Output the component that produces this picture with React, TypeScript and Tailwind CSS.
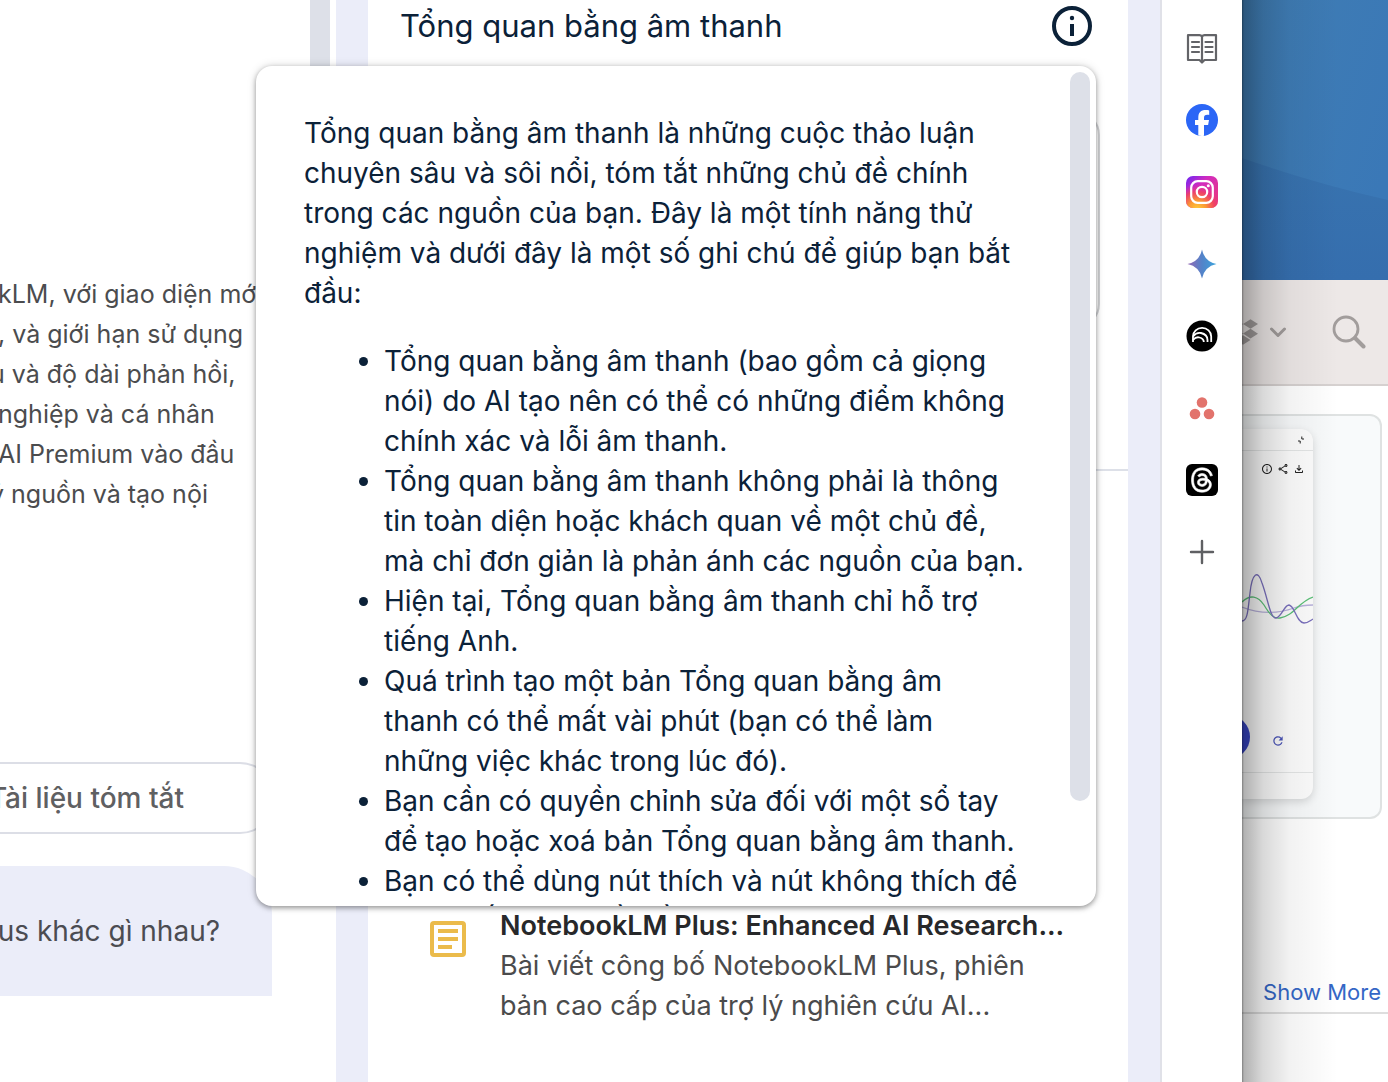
import { FaDropbox, FaThreads } from "react-icons/fa6"
import { MdInfoOutline, MdOutlineFileDownload, MdOutlineShare, MdRefresh } from "react-icons/md"

const answerLines = [
  { text: "kLM, với giao diện mới", indent: "-ml-0.5" },
  { text: ", và giới hạn sử dụng", indent: "-ml-0.5" },
  { text: "u và độ dài phản hồi,", indent: "-ml-2.5" },
  { text: "nghiệp và cá nhân", indent: "-ml-0.5" },
  { text: "AI Premium vào đầu", indent: "-ml-0.5" },
  { text: "ý nguồn và tạo nội", indent: "-ml-2.5" },
]

const notes = [
  "Tổng quan bằng âm thanh (bao gồm cả giọng nói) do AI tạo nên có thể có những điểm không chính xác và lỗi âm thanh.",
  "Tổng quan bằng âm thanh không phải là thông tin toàn diện hoặc khách quan về một chủ đề, mà chỉ đơn giản là phản ánh các nguồn của bạn.",
  "Hiện tại, Tổng quan bằng âm thanh chỉ hỗ trợ tiếng Anh.",
  "Quá trình tạo một bản Tổng quan bằng âm thanh có thể mất vài phút (bạn có thể làm những việc khác trong lúc đó).",
  "Bạn cần có quyền chỉnh sửa đối với một sổ tay để tạo hoặc xoá bản Tổng quan bằng âm thanh.",
  "Bạn có thể dùng nút thích và nút không thích để gửi ý kiến phản hồi về trải nghiệm của bạn.",
]

function ReadingListIcon() {
  return (
    <svg viewBox="0 0 32 32" className="size-8" fill="none" stroke="#636468" strokeWidth="2.200">
      <path d="M2 3.200h11.500q1.600 0 2.500 1.300 .9-1.300 2.500-1.300H30V28H18.500L16 30.500 13.500 28H2z" strokeLinejoin="round" />
      <path d="M16 4.500V30" />
      <path d="M6 10h7M6 15h7M6 20h7M19.500 10h7M19.500 15h7M19.500 20h7" strokeLinecap="round" />
    </svg>
  )
}

function FacebookIcon() {
  return (
    <svg viewBox="0 0 32 32" className="size-8">
      <circle cx="16" cy="16" r="16" fill="#2b66f6" />
      <path
        d="M12.300 31.600V21H9v-5h3.300v-2.200C12.300 8.500 14.700 6 19.800 6c1 0 2.700.2 3.400.4v4.500c-.4 0-1-.1-1.800-.1-2.500 0-3.400 1-3.400 3.400V16h5l-.9 5H18v10.800a16 16 0 0 1-5.700-.2z"
        fill="#fff"
      />
    </svg>
  )
}

function InstagramIcon() {
  return (
    <svg viewBox="0 0 32 32" className="size-8">
      <defs>
        <linearGradient id="ig-base" x1="0" y1="0" x2="1" y2="1">
          <stop offset="0" stopColor="#6a24f5" />
          <stop offset="0.35" stopColor="#d12cc0" />
          <stop offset="1" stopColor="#ee3a70" />
        </linearGradient>
        <radialGradient id="ig-warm" cx="0.35" cy="1.05" r="0.8">
          <stop offset="0" stopColor="#ffce3a" />
          <stop offset="0.35" stopColor="#fb9a33" />
          <stop offset="0.7" stopColor="#f2445a" stopOpacity="0.8" />
          <stop offset="1" stopColor="#e0309a" stopOpacity="0" />
        </radialGradient>
      </defs>
      <rect width="32" height="32" rx="7" fill="url(#ig-base)" />
      <rect width="32" height="32" rx="7" fill="url(#ig-warm)" />
      <g fill="none" stroke="#fff" strokeWidth="2.200">
        <rect x="5.200" y="5.200" width="21.600" height="21.600" rx="6.500" />
        <circle cx="16" cy="16" r="5.200" />
      </g>
      <circle cx="22.300" cy="9.700" r="1.500" fill="#fff" />
    </svg>
  )
}

function GeminiIcon() {
  return (
    <svg viewBox="0 0 32 32" className="size-8">
      <defs>
        <linearGradient id="gemini" x1="0" y1="0" x2="1" y2="0">
          <stop offset="0" stopColor="#9468b4" />
          <stop offset="0.5" stopColor="#5383c9" />
          <stop offset="1" stopColor="#3ba4dc" />
        </linearGradient>
      </defs>
      <path d="M16 1.500Q18.500 13.500 30.500 16 18.500 18.500 16 30.500 13.500 18.500 1.500 16 13.500 13.500 16 1.500z" fill="url(#gemini)" />
    </svg>
  )
}

function NotebookIcon() {
  return (
    <svg viewBox="0 0 32 32" className="size-8">
      <circle cx="16" cy="16" r="15.500" fill="#000" />
      <g fill="none" stroke="#fff" strokeWidth="1.800">
        <path d="M7 22v-5.500a9 8.500 0 0 1 18.200 0V22" />
        <path d="M7 16.500q3.500-4.500 8-3.500 6.500 1.500 6.500 7v2" />
        <path d="M7 20q3-3.500 6.500-2.500 4.300 1.200 4.300 4.500" />
      </g>
    </svg>
  )
}

function AsanaIcon() {
  return (
    <svg viewBox="0 0 32 32" className="size-8" fill="#e2736c">
      <circle cx="16" cy="10.500" r="5.300" />
      <circle cx="9" cy="22" r="5.300" />
      <circle cx="23" cy="22" r="5.300" />
    </svg>
  )
}

const shortcuts = [
  { label: "Reading list", icon: <ReadingListIcon /> },
  { label: "Facebook", icon: <FacebookIcon /> },
  { label: "Instagram", icon: <InstagramIcon /> },
  { label: "Gemini", icon: <GeminiIcon /> },
  { label: "NotebookLM", icon: <NotebookIcon /> },
  { label: "Asana", icon: <AsanaIcon /> },
  {
    label: "Threads",
    icon: (
      <span className="flex size-8 items-center justify-center rounded-md bg-black">
        <FaThreads className="size-[26px] stroke-white stroke-[12px] text-white" />
      </span>
    ),
  },
  {
    label: "Add",
    icon: (
      <svg viewBox="0 0 32 32" className="size-8" stroke="#5f6063" strokeWidth="2.400" strokeLinecap="round">
        <path d="M16 5v22M5 16h22" />
      </svg>
    ),
  },
]

function ChatColumn() {
  return (
    <main className="flex w-[336px] shrink-0 overflow-hidden bg-white">
      <div className="min-w-0 flex-1 pt-[274px]">
        <div className="text-[25px] leading-10 whitespace-nowrap text-[#4b4c4e]">
          {answerLines.map((line) => (
            <p key={line.text} className={line.indent}>
              {line.text}
            </p>
          ))}
        </div>
        <button
          type="button"
          className="mt-[248px] flex h-[72px] w-[276px] items-center justify-end rounded-r-full border-2 border-l-0 border-[#dcdee6] pr-[90px] text-[28px] font-medium whitespace-nowrap text-[#5f6062]"
        >
          Tài liệu tóm tắt
        </button>
        <div className="mt-8 flex h-[130px] w-[272px] items-center justify-end rounded-tr-[48px] bg-[#ebedf9] pr-[52px] text-[28px] whitespace-nowrap text-[#4b4c52]">
          lus khác gì nhau?
        </div>
      </div>
      <div className="mr-1.5 h-[600px] w-5 bg-[#dde0e8]" />
    </main>
  )
}

function InfoPopover() {
  return (
    <div
      role="dialog"
      aria-label="Tổng quan bằng âm thanh"
      className="absolute top-[66px] -left-28 z-10 flex h-[840px] w-[840px] overflow-hidden rounded-2xl bg-white text-[28px] leading-10 text-[#0b2138] shadow-[0_2px_5px_rgba(0,0,0,0.35),0_0_10px_rgba(0,0,0,0.15)]"
    >
      <div className="flex-1 pt-[47px] pr-[46px] pl-12">
        <p>
          Tổng quan bằng âm thanh là những cuộc thảo luận chuyên sâu và sôi nổi, tóm tắt những chủ đề chính trong các
          nguồn của bạn. Đây là một tính năng thử nghiệm và dưới đây là một số ghi chú để giúp bạn bắt đầu:
        </p>
        <ul className="mt-7 list-disc pl-20">
          {notes.map((note) => (
            <li key={note}>{note}</li>
          ))}
        </ul>
      </div>
      <div className="mt-1.5 mr-1.5 h-[729px] w-5 rounded-full bg-[#dde0e8]" />
    </div>
  )
}

function StudioPanel() {
  return (
    <section className="relative w-[760px] shrink-0 bg-white">
      <header className="flex h-[52px] items-center justify-between pr-9 pl-8">
        <h2 className="text-[31px] leading-10 text-[#0b2138]">Tổng quan bằng âm thanh</h2>
        <button type="button" aria-label="Thông tin" className="size-10">
          <svg viewBox="0 0 40 40" className="size-10" fill="#0b2138">
            <circle cx="20" cy="20" r="18" fill="none" stroke="#0b2138" strokeWidth="4" />
            <circle cx="20" cy="12" r="2.200" />
            <path d="M18 18h4v12h-4z" />
          </svg>
        </button>
      </header>
      <div className="mt-[59px] mr-7 ml-8 h-[217px] rounded-3xl border-2 border-[#d0d1d4]" />
      <hr className="mt-[141px] border-t-2 border-[#dde0e8]" />
      <article className="mt-[435px] flex pl-[62px]">
        <svg viewBox="0 0 36 36" className="mt-[15px] size-9 shrink-0">
          <rect x="2" y="2" width="32" height="32" rx="2" fill="none" stroke="#ebbb4b" strokeWidth="4" />
          <path d="M8 10h20M8 18h20M8 26h14" stroke="#ebbb4b" strokeWidth="4" />
        </svg>
        <div className="ml-[34px] text-[27px] leading-10 whitespace-nowrap text-[#4b4b4c]">
          <h3 className="font-semibold text-[#27282a]">NotebookLM Plus: Enhanced AI Research...</h3>
          <p>
            Bài viết công bố NotebookLM Plus, phiên
            <br />
            bản cao cấp của trợ lý nghiên cứu AI...
          </p>
        </div>
      </article>
      <InfoPopover />
    </section>
  )
}

function PreviewCard() {
  return (
    <div className="mt-7 mr-1.5 h-[405px] rounded-r-xl border-2 border-l-0 border-[#dfe2e2] bg-[#f8fafb] pt-[13px]">
      <div className="flex h-[370px] w-[71px] flex-col overflow-hidden rounded-r-xl bg-[#fdfdfd] shadow-[0_3px_8px_rgba(0,0,0,0.14)]">
        <div className="flex h-[22px] items-center justify-end border-b border-[#e4e6e6] pr-2">
          <svg viewBox="0 0 8 8" className="size-2" fill="none" stroke="#222">
            <path d="M1 5h2.200V7.500M7 3H4.800V.5" />
          </svg>
        </div>
        <div className="mt-3 flex justify-end gap-1 pr-2 text-[#222]">
          <MdInfoOutline className="size-3" />
          <MdOutlineShare className="size-3" />
          <MdOutlineFileDownload className="size-3" />
        </div>
        <svg viewBox="0 0 71 90" className="mt-[84px] h-[90px] w-[71px] shrink-0" fill="none" strokeWidth="1.300">
          <path d="M0 48C20 56 38 54 52 49 60 46 66 46 71 46" stroke="#b9b2dc" />
          <path d="M0 43C8 35 16 37 22 46 28 56 32 60 38 59 52 57 56 43 71 38" stroke="#5cc178" />
          <path d="M0 62C6 62 6 49 8 34 10 14 16 10 20 24 26 40 28 59 34 59 40 58 42 46 47 46 53 47 54 63 62 64 66 64 68 62 71 60" stroke="#7a70bd" />
        </svg>
        <div className="mt-[66px] flex h-11 shrink-0 items-center">
          <div className="-ml-9 size-11 shrink-0 rounded-full bg-[#3846c8]" />
          <MdRefresh className="mt-2 ml-[21px] size-3.5 shrink-0 text-[#4a54b8]" />
        </div>
        <div className="mt-[13px] border-t border-[#e4e6e6]" />
      </div>
    </div>
  )
}

function Desktop() {
  return (
    <div className="relative min-w-0 flex-1 overflow-hidden bg-white">
      <svg viewBox="0 0 146 280" preserveAspectRatio="none" className="block h-[280px] w-full">
        <defs>
          <linearGradient id="sky" x1="0" y1="0" x2="1" y2="0.6">
            <stop offset="0" stopColor="#407db3" />
            <stop offset="1" stopColor="#3a78b7" />
          </linearGradient>
          <linearGradient id="hill" x1="0" y1="0" x2="0" y2="1">
            <stop offset="0" stopColor="#3873af" />
            <stop offset="1" stopColor="#356eae" />
          </linearGradient>
        </defs>
        <path d="M0 0h146v280H0z" fill="url(#sky)" />
        <path d="M0 158Q75 184 146 200V280H0z" fill="url(#hill)" />
      </svg>
      <div className="flex h-[106px] items-center border-b-2 border-[#d6d1d0] bg-[#ede8e7] text-[#a29d9c]">
        <FaDropbox className="-ml-3.5 size-[30px] shrink-0" />
        <svg viewBox="0 0 20 20" className="ml-2.5 size-5 shrink-0" fill="none" stroke="currentColor" strokeWidth="3">
          <path d="m3.500 7 6.500 6.500L16.500 7" strokeLinecap="round" strokeLinejoin="round" />
        </svg>
        <button type="button" aria-label="Search" className="mr-[22px] ml-auto">
          <svg viewBox="0 0 34 34" className="size-[34px]" fill="none" stroke="currentColor">
            <circle cx="14" cy="14" r="12" strokeWidth="2.800" />
            <path d="m23 23 8.500 8.500" strokeWidth="4" strokeLinecap="round" />
          </svg>
        </button>
      </div>
      <PreviewCard />
      <div className="mt-[157px] flex justify-end border-b-2 border-[#dedede] pr-[7px] pb-1">
        <a href="#more" className="text-[22px] leading-8 whitespace-nowrap text-[#3467c6]">
          Show More
        </a>
      </div>
      {/* shade cast by the front window */}
      <div className="pointer-events-none absolute inset-y-0 left-0 w-24 bg-[linear-gradient(to_right,rgba(0,0,0,0.5)_0,rgba(0,0,0,0.3)_2px,rgba(0,0,0,0.15)_22%,rgba(0,0,0,0.05)_50%,rgba(0,0,0,0)_100%)]" />
    </div>
  )
}

export default function App() {
  return (
    <div className="flex min-h-screen overflow-hidden bg-[#ebedf9] font-[Inter,'Noto_Sans',sans-serif]">
      <ChatColumn />
      <div className="w-8 shrink-0" />
      <StudioPanel />
      <div className="w-8 shrink-0" />
      <nav className="flex w-[82px] shrink-0 flex-col items-center gap-10 border-l-2 border-[#e0e1e8] bg-white pt-8">
        {shortcuts.map((item) => (
          <button key={item.label} type="button" aria-label={item.label} className="size-8">
            {item.icon}
          </button>
        ))}
      </nav>
      <Desktop />
    </div>
  )
}
